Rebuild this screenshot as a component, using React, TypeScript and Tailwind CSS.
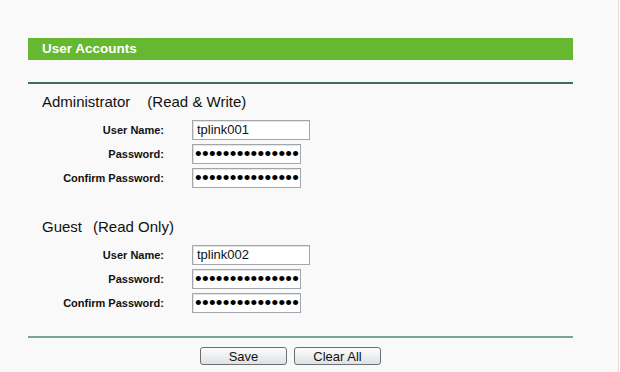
import React from "react";

const font = "font-['Liberation_Sans',Arial,sans-serif]";

function Field({ label, value, password, wide }: { label: string; value: string; password?: boolean; wide?: boolean }) {
  return (
    <div className="flex h-[20px] items-center">
      <div className="w-[136px] shrink-0 text-right text-[11px] font-bold text-[#111]">{label}</div>
      <div
        className={`ml-[28px] flex h-[20px] items-center ${wide ? "w-[118px] pl-[4px]" : "w-[109px] pl-[2px]"} overflow-hidden whitespace-nowrap border border-[#a3a7ab] bg-white shadow-[inset_1px_1px_0_#e4e4e4]`}
      >
        {password ? (
          <span className="block text-[19px] leading-[18px] tracking-[0.3px] text-black">{"•".repeat(15)}</span>
        ) : (
          <span className="block text-[13px] leading-[18px] text-[#111]">{value}</span>
        )}
      </div>
    </div>
  );
}

function Section({ title, sub, user, gap }: { title: string; sub: string; user: string; gap: string }) {
  return (
    <div className="flex flex-col">
      <div className="h-[20px] pl-[14px] text-[15px] leading-[20px] text-[#111]">
        {title}
        <span className={gap}>{sub}</span>
      </div>
      <div className="mt-[8px] flex flex-col gap-[4px]">
        <Field label="User Name:" value={user} wide />
        <Field label="Password:" value="" password />
        <Field label="Confirm Password:" value="" password />
      </div>
    </div>
  );
}

export default function App() {
  return (
    <div className={`${font} h-[372px] w-[619px] border-r border-[#dedede] bg-[#f8f9f8]`}>
      <div className="ml-[28px] w-[545px] pt-[38px]">
        <div className="h-[22px] bg-[#65b830] pl-[14px] text-[13.5px] font-bold leading-[21px] text-white">User Accounts</div>
        <div className="mt-[22px] h-[2px] bg-[#3d6d62]" />
        <div className="mt-[8px]">
          <Section title="Administrator" sub="(Read & Write)" user="tplink001" gap="ml-[17px]" />
        </div>
        <div className="mt-[29px]">
          <Section title="Guest" sub="(Read Only)" user="tplink002" gap="ml-[11px]" />
        </div>
        <div className="mt-[23px] h-[2px] bg-[#79a596]" />
        <div className="mt-[9px] flex gap-[7px] pl-[172px]">
          <button className="h-[18px] w-[87px] rounded-[3px] border border-[#6a7075] bg-gradient-to-b from-[#fdfdfd] to-[#dfe1e2] text-[13px] leading-[15px] text-[#111]">
            Save
          </button>
          <button className="h-[18px] w-[87px] rounded-[3px] border border-[#6a7075] bg-gradient-to-b from-[#fdfdfd] to-[#dfe1e2] text-[13px] leading-[15px] text-[#111]">
            Clear All
          </button>
        </div>
      </div>
    </div>
  );
}
